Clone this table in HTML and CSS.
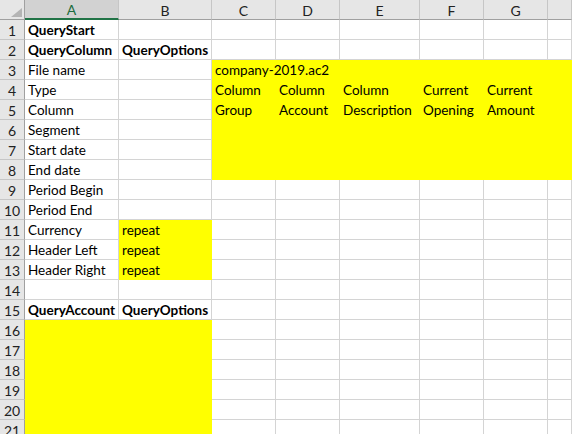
FILE: index.html
```html
<!DOCTYPE html>
<html>
<head>
<meta charset="utf-8">
<link rel="stylesheet" href="styles.css">
</head>
<body>
<div class="sheet">
  <div class="corner"><span class="tri"></span></div>
  <div class="ch sel">A</div><div class="ch">B</div><div class="ch">C</div><div class="ch">D</div><div class="ch">E</div><div class="ch">F</div><div class="ch">G</div><div class="ch"></div>

  <div class="rh">1</div><div class="c b">QueryStart</div><div class="c"></div><div class="c"></div><div class="c"></div><div class="c"></div><div class="c"></div><div class="c"></div><div class="c"></div>
  <div class="rh">2</div><div class="c b">QueryColumn</div><div class="c b">QueryOptions</div><div class="c"></div><div class="c"></div><div class="c"></div><div class="c"></div><div class="c"></div><div class="c"></div>
  <div class="rh">3</div><div class="c">File name</div><div class="c"></div><div class="c y span2">company-2019.ac2</div><div class="c y"></div><div class="c y"></div><div class="c y"></div><div class="c y"></div>
  <div class="rh">4</div><div class="c">Type</div><div class="c"></div><div class="c y">Column</div><div class="c y">Column</div><div class="c y">Column</div><div class="c y">Current</div><div class="c y">Current</div><div class="c y"></div>
  <div class="rh">5</div><div class="c">Column</div><div class="c"></div><div class="c y">Group</div><div class="c y">Account</div><div class="c y">Description</div><div class="c y">Opening</div><div class="c y">Amount</div><div class="c y"></div>
  <div class="rh">6</div><div class="c">Segment</div><div class="c"></div><div class="c y"></div><div class="c y"></div><div class="c y"></div><div class="c y"></div><div class="c y"></div><div class="c y"></div>
  <div class="rh">7</div><div class="c">Start date</div><div class="c"></div><div class="c y"></div><div class="c y"></div><div class="c y"></div><div class="c y"></div><div class="c y"></div><div class="c y"></div>
  <div class="rh">8</div><div class="c">End date</div><div class="c"></div><div class="c y"></div><div class="c y"></div><div class="c y"></div><div class="c y"></div><div class="c y"></div><div class="c y"></div>
  <div class="rh">9</div><div class="c">Period Begin</div><div class="c"></div><div class="c"></div><div class="c"></div><div class="c"></div><div class="c"></div><div class="c"></div><div class="c"></div>
  <div class="rh">10</div><div class="c">Period End</div><div class="c"></div><div class="c"></div><div class="c"></div><div class="c"></div><div class="c"></div><div class="c"></div><div class="c"></div>
  <div class="rh">11</div><div class="c">Currency</div><div class="c y">repeat</div><div class="c"></div><div class="c"></div><div class="c"></div><div class="c"></div><div class="c"></div><div class="c"></div>
  <div class="rh">12</div><div class="c">Header Left</div><div class="c y">repeat</div><div class="c"></div><div class="c"></div><div class="c"></div><div class="c"></div><div class="c"></div><div class="c"></div>
  <div class="rh">13</div><div class="c">Header Right</div><div class="c y">repeat</div><div class="c"></div><div class="c"></div><div class="c"></div><div class="c"></div><div class="c"></div><div class="c"></div>
  <div class="rh">14</div><div class="c"></div><div class="c"></div><div class="c"></div><div class="c"></div><div class="c"></div><div class="c"></div><div class="c"></div><div class="c"></div>
  <div class="rh">15</div><div class="c b">QueryAccount</div><div class="c b">QueryOptions</div><div class="c"></div><div class="c"></div><div class="c"></div><div class="c"></div><div class="c"></div><div class="c"></div>
  <div class="rh">16</div><div class="c y"></div><div class="c y"></div><div class="c"></div><div class="c"></div><div class="c"></div><div class="c"></div><div class="c"></div><div class="c"></div>
  <div class="rh">17</div><div class="c y"></div><div class="c y"></div><div class="c"></div><div class="c"></div><div class="c"></div><div class="c"></div><div class="c"></div><div class="c"></div>
  <div class="rh">18</div><div class="c y"></div><div class="c y"></div><div class="c"></div><div class="c"></div><div class="c"></div><div class="c"></div><div class="c"></div><div class="c"></div>
  <div class="rh">19</div><div class="c y"></div><div class="c y"></div><div class="c"></div><div class="c"></div><div class="c"></div><div class="c"></div><div class="c"></div><div class="c"></div>
  <div class="rh">20</div><div class="c y"></div><div class="c y"></div><div class="c"></div><div class="c"></div><div class="c"></div><div class="c"></div><div class="c"></div><div class="c"></div>
  <div class="rh">21</div><div class="c y"></div><div class="c y"></div><div class="c"></div><div class="c"></div><div class="c"></div><div class="c"></div><div class="c"></div><div class="c"></div>
</div>
</body>
</html>
```

FILE: styles.css
```css
html, body {
  margin: 0;
  padding: 0;
  background: #ffffff;
  overflow: hidden;
}
.sheet {
  display: grid;
  grid-template-columns: 25px 94px 93px 64px 64px 80px 64px 64px 1fr;
  grid-auto-rows: 20px;
  width: 572px;
  height: 434px;
  overflow: hidden;
  font-family: Lato, "Liberation Sans", sans-serif;
  font-size: 13.5px;
  color: #000;
}
.sheet > div {
  box-sizing: border-box;
  line-height: 19px;
  padding-top: 1px;
  white-space: nowrap;
  overflow: hidden;
}
.corner {
  background: #e6e6e6;
  border-right: 1px solid #a0a0a0;
  border-bottom: 1px solid #a0a0a0;
  position: relative;
}
.tri {
  position: absolute;
  right: 2px;
  bottom: 2px;
  width: 0;
  height: 0;
  border-left: 11px solid transparent;
  border-bottom: 9px solid #b4b4b4;
}
.ch {
  background: #e6e6e6;
  border-right: 1px solid #c6c6c6;
  border-bottom: 1px solid #a0a0a0;
  text-align: center;
  color: #222;
  font-size: 14px;
}
.ch.sel {
  background: #d2d2d2;
  color: #1d6b3e;
  border-bottom: 2px solid #217346;
  line-height: 18px !important;
}
.rh {
  background: #e6e6e6;
  border-right: 1px solid #a0a0a0;
  border-bottom: 1px solid #c6c6c6;
  text-align: center;
  color: #222;
  font-size: 14px;
}
.c {
  border-right: 1px solid #d4d4d4;
  border-bottom: 1px solid #d4d4d4;
  padding-left: 3px;
}
.c.b {
  font-weight: bold;
}
.c.y {
  background: #ffff00;
  border-color: #ffff00;
}
.span2 {
  grid-column: span 2;
}
```
